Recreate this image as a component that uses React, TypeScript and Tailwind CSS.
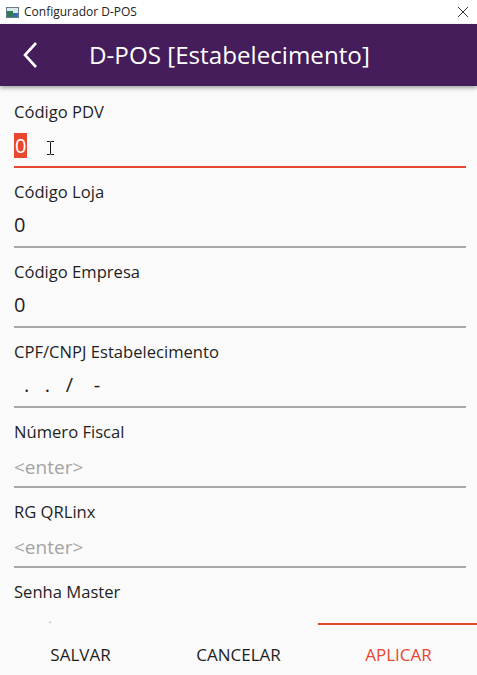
import React from 'react';

const fields = [
  { label: 'Código PDV', value: '0', focused: true },
  { label: 'Código Loja', value: '0' },
  { label: 'Código Empresa', value: '0' },
  { label: 'CPF/CNPJ Estabelecimento', value: ' .  .  /   -', mask: true },
  { label: 'Número Fiscal', placeholder: '<enter>' },
  { label: 'RG QRLinx', placeholder: '<enter>' },
  { label: 'Senha Master', placeholder: '<enter>' },
];

const App = () => {
  return (
    <div
      className="w-[477px] h-[675px] flex flex-col bg-[#fafafa] overflow-hidden"
      style={{ fontFamily: '"Open Sans", "Noto Sans", sans-serif' }}
    >
      {/* Window title bar */}
      <div className="h-[24px] bg-white flex items-center px-[6px] shrink-0">
        <div className="w-[13px] h-[11px] border border-[#6a7a8a] bg-[#dfe8ef] flex items-end mr-[5px]">
          <div className="w-[6px] h-[6px] bg-[#2f7d4f]" />
          <div className="w-[5px] h-[4px] bg-[#3b6fb3]" />
        </div>
        <span className="text-[12px] text-[#222]">Configurador D-POS</span>
        <svg className="ml-auto mr-[2px]" width="12" height="12" viewBox="0 0 12 12">
          <path d="M1 1L11 11M11 1L1 11" stroke="#333" strokeWidth="1" />
        </svg>
      </div>

      {/* App header */}
      <div className="h-[62px] bg-[#441d5a] flex items-center shrink-0 shadow-[0_2px_4px_rgba(0,0,0,0.35)] relative z-10">
        <svg className="ml-[22px]" width="16" height="28" viewBox="0 0 16 28">
          <path d="M14 2L3 14L14 26" stroke="white" strokeWidth="2.6" fill="none" />
        </svg>
        <span className="ml-[51px] text-[24.2px] text-white">D-POS [Estabelecimento]</span>
      </div>

      {/* Form */}
      <div className="flex-1 overflow-hidden pt-[2px]">
        {fields.map((f) => (
          <div key={f.label} className="mx-[14px] w-[452px] h-[80px] flex flex-col pt-[12px]">
            <div className="h-[24px] text-[16.6px] leading-[24px] text-[#1f1f1f]">{f.label}</div>
            <div className="h-[42px] flex items-center text-[20px] relative">
              {f.focused ? (
                <>
                  <span className="bg-[#e8472f] text-white leading-[25px] px-[1px]">{f.value}</span>
                  <svg className="ml-[19px] mt-[6px]" width="9" height="14" viewBox="0 0 9 14">
                    <path d="M1 0.5H3.5Q4.5 0.5 4.5 1.5V12.5Q4.5 13.5 3.5 13.5H1M8 0.5H5.5Q4.5 0.5 4.5 1.5M4.5 12.5Q4.5 13.5 5.5 13.5H8" stroke="#111" strokeWidth="1" fill="none" />
                  </svg>
                </>
              ) : f.placeholder ? (
                <span className="text-[#a3a3a3] text-[19px] pt-[4px]">{f.placeholder}</span>
              ) : f.mask ? (
                <span className="text-[#1f1f1f] whitespace-pre pl-[10px]">.   .   /    -</span>
              ) : (
                <span className="text-[#1f1f1f]">{f.value}</span>
              )}
            </div>
            <div className={f.focused ? 'h-[2px] bg-[#e8472f]' : 'h-[2px] bg-[#a8a8a8]'} />
          </div>
        ))}
      </div>

      {/* Bottom buttons */}
      <div className="h-[52px] grid grid-cols-3 shrink-0 bg-[#fafafa]">
        <button className="text-[17px] text-[#1f1f1f] pt-[12px] pl-[2px]">SALVAR</button>
        <button className="text-[17px] text-[#1f1f1f] pt-[12px]">CANCELAR</button>
        <button className="text-[17px] text-[#e8472f] border-t-2 border-[#e8472f] pt-[10px] pl-[2px]">APLICAR</button>
      </div>
    </div>
  );
};

export default App;
